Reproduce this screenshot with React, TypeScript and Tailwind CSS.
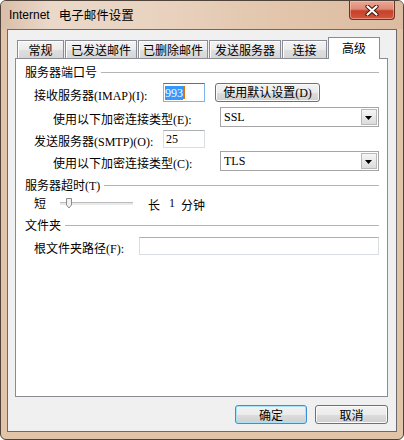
import React from "react";

const LAT = "font-['Liberation_Serif',serif] text-[12px] leading-[14px]";

function L({ c, l }: { c: string; l?: string }) {
  return (
    <span className="whitespace-nowrap text-[12px] leading-[14px] text-black">
      {c}
      {l && <span className="font-['Liberation_Serif',serif] text-[12px] leading-[14px]">{l}</span>}
    </span>
  );
}

function Header({ c, l }: { c: string; l?: string }) {
  return (
    <div className="flex h-[16px] items-center pl-[9px] pr-[8px]">
      <L c={c} l={l} />
      <div className="ml-[4px] h-px flex-1 bg-[#b4b4b4]" />
    </div>
  );
}

function Select({ value }: { value: string }) {
  return (
    <div className="flex h-[20px] w-[159px] items-center border border-[#a5a5a5] bg-white">
      <span className="flex-1 pl-[3px] font-['Liberation_Serif',serif] text-[12px] leading-[14px] text-black">
        {value}
      </span>
      <div className="mr-[1px] flex h-[16px] w-[16px] items-center justify-center border border-[#b9b9b9] bg-[linear-gradient(#f6f6f6,#dcdcdc)]">
        <svg width="8" height="5" viewBox="0 0 8 5" className="mt-[3px]">
          <path d="M0 0 H7 L3.5 4 Z" fill="#000" />
        </svg>
      </div>
    </div>
  );
}

function Btn({ children, w, def }: { children: React.ReactNode; w: string; def?: boolean }) {
  return (
    <div
      className={
        "flex h-[19px] items-center justify-center rounded-[3px] border bg-[linear-gradient(#f2f2f2_0%,#ebebeb_50%,#dddddd_51%,#cfcfcf_100%)] " +
        w +
        (def
          ? " border-[#3c8fd0] shadow-[inset_0_0_0_1px_#a6e2f8]"
          : " border-[#707070] shadow-[inset_0_0_0_1px_#fbfbfb]")
      }
    >
      {children}
    </div>
  );
}

const tabs = [
  { t: "常规", w: "w-[47px]" },
  { t: "已发送邮件", w: "w-[72px]" },
  { t: "已删除邮件", w: "w-[70px]" },
  { t: "发送服务器", w: "w-[72px]" },
  { t: "连接", w: "w-[45px]" },
];

export default function App() {
  return (
    <div className="flex h-[440px] w-[404px] flex-col overflow-hidden rounded-[6px] border border-[#4f433a] bg-[#e2c4a9] font-['Noto_Sans_CJK_SC',sans-serif] text-black">
      {/* Title bar */}
      <div className="flex h-[28px] items-start bg-[linear-gradient(90deg,#d9bea8_0%,#ead8c9_12%,#e9d4c2_35%,#e2c5ab_70%,#dcbca1_100%)]">
        <span className="mt-[6px] flex items-center pl-[8px] text-[12.5px] leading-[16px] text-black">
          <span className="font-['Liberation_Sans',sans-serif] text-[12px]">Internet</span>
          <span className="ml-[9px]">电子邮件设置</span>
        </span>
        <div className="ml-auto mr-[8px] flex h-[19px] w-[46px] items-center justify-center rounded-b-[4px] border border-t-0 border-[#6b3326] bg-[linear-gradient(#eaa796_0%,#de8a74_45%,#c7402a_55%,#d2573d_100%)] shadow-[inset_0_0_0_1px_rgba(255,200,190,0.5)]">
          <svg width="14" height="11" viewBox="0 0 14 11">
            <path d="M2.5 1.5 L11.5 9.5 M11.5 1.5 L2.5 9.5" stroke="#43190f" strokeWidth="4.2" strokeLinecap="round" />
            <path d="M2.5 1.5 L11.5 9.5 M11.5 1.5 L2.5 9.5" stroke="#ffffff" strokeWidth="2.2" strokeLinecap="round" />
          </svg>
        </div>
      </div>

      {/* Client area */}
      <div className="mx-[6px] flex h-[403px] flex-col border border-[#6a6a6a] bg-[#f0f0f0] pl-[7px] pr-[8px] pt-[7px]">
        {/* Tabs */}
        <div className="flex items-end gap-[1px] pl-[2px]">
          {tabs.map((tab) => (
            <div
              key={tab.t}
              className={
                "flex h-[18px] items-center justify-center border border-b-0 border-[#898c95] bg-[linear-gradient(#f4f4f4_0%,#ebebeb_50%,#dfdfdf_51%,#d6d6d6_100%)] shadow-[inset_1px_1px_0_#ffffff] text-[12px] leading-[14px] " +
                tab.w
              }
            >
              {tab.t}
            </div>
          ))}
          <div className="relative z-10 -mb-px flex h-[22px] w-[52px] items-start justify-center border border-b-0 border-[#898c95] bg-white pt-[3px] text-[12px] leading-[14px]">
            高级
          </div>
        </div>

        {/* Panel */}
        <div className="flex h-[339px] flex-col border border-[#898c95] bg-white pt-[5px]">
          <Header c="服务器端口号" />

          <div className="mt-[3px] flex h-[19px] items-center pl-[18px]">
            <div className="w-[129px]">
              <L c="接收服务器" l="(IMAP)(I):" />
            </div>
            <div className="flex h-[19px] w-[42px] items-center border border-[#7eb4ea] border-t-[#3d7bad] bg-white pl-[1px]">
              <span className={"bg-[#3399ff] text-white " + LAT}>993</span>
              <span className="h-[13px] w-[2px] bg-[#d9730d]" />
            </div>
            <div className="ml-[10px]">
              <Btn w="w-[105px]">
                <L c="使用默认设置" l="(D)" />
              </Btn>
            </div>
          </div>

          <div className="mt-[5px] flex h-[20px] items-center pl-[37px]">
            <div className="w-[167px]">
              <L c="使用以下加密连接类型" l="(E):" />
            </div>
            <Select value="SSL" />
          </div>

          <div className="mt-[3px] flex h-[18px] items-center pl-[18px]">
            <div className="w-[129px]">
              <L c="发送服务器" l="(SMTP)(O):" />
            </div>
            <div className="flex h-[18px] w-[42px] items-center border border-[#dadde3] border-t-[#abadb3] bg-white pl-[2px]">
              <span className={"text-black " + LAT}>25</span>
            </div>
          </div>

          <div className="mt-[3px] flex h-[20px] items-center pl-[37px]">
            <div className="w-[167px]">
              <L c="使用以下加密连接类型" l="(C):" />
            </div>
            <Select value="TLS" />
          </div>

          <div className="mt-[6px]">
            <Header c="服务器超时" l="(T)" />
          </div>

          <div className="mt-[2px] flex h-[16px] items-center pl-[18px]">
            <L c="短" />
            <div className="relative ml-[14px] flex h-[16px] w-[73px] items-center">
              <div className="h-[3px] w-full border-t border-[#bcbcbc] bg-[#e9e9e9] shadow-[0_1px_0_#ffffff]" />
              <svg className="absolute left-[6px] top-[3px]" width="7" height="11" viewBox="0 0 7 11">
                <path d="M0.5 0.5 H5.5 V7 L3 10 L0.5 7 Z" fill="#f2f2f2" stroke="#8c8c8c" />
              </svg>
            </div>
            <span className="ml-[15px]">
              <L c="长" />
            </span>
            <span className={"ml-[9px] " + LAT}>1</span>
            <span className="ml-[6px]">
              <L c="分钟" />
            </span>
          </div>

          <div className="mt-[6px]">
            <Header c="文件夹" />
          </div>

          <div className="mt-[4px] flex h-[18px] items-center pl-[18px]">
            <div className="w-[105px]">
              <L c="根文件夹路径" l="(F):" />
            </div>
            <div className="h-[18px] w-[240px] border border-[#dadde3] border-t-[#abadb3] bg-white" />
          </div>
        </div>

        {/* Dialog buttons */}
        <div className="mt-[8px] flex justify-end gap-[8px]">
          <Btn w="w-[72px]" def>
            <L c="确定" />
          </Btn>
          <Btn w="w-[73px]">
            <L c="取消" />
          </Btn>
        </div>
      </div>
    </div>
  );
}
